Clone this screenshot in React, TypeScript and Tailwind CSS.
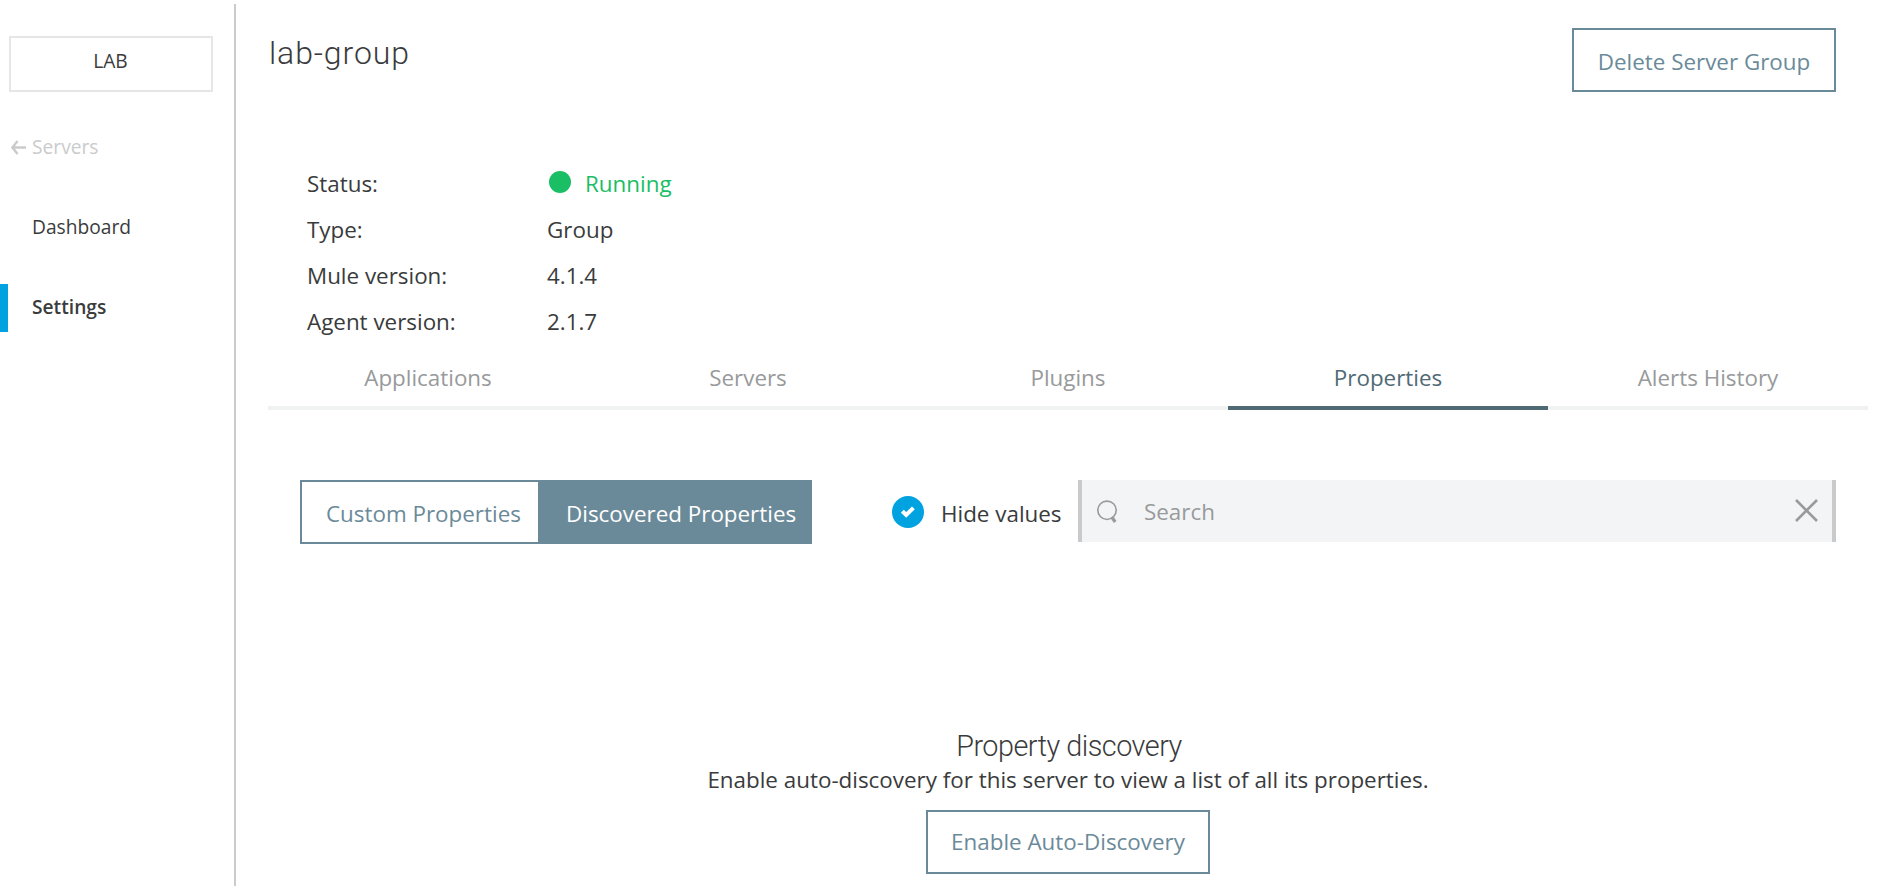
import React from "react";

const navItems = [
  { label: "Dashboard", active: false },
  { label: "Settings", active: true },
];

const details = [
  { label: "Type:", value: "Group" },
  { label: "Mule version:", value: "4.1.4" },
  { label: "Agent version:", value: "2.1.7" },
];

const tabs = ["Applications", "Servers", "Plugins", "Properties", "Alerts History"];
const activeTab = "Properties";

function Sidebar() {
  return (
    <aside className="flex w-[234px] shrink-0 flex-col pt-8 text-[19.2px] leading-6">
      <button className="ml-[9px] flex h-14 w-[204px] items-center justify-center border-2 border-[#e6e6e6] pb-[7px] pr-[1px]">
        LAB
      </button>
      <a className="mt-8 flex h-12 items-center gap-[6px] pb-[3px] pl-[11px] text-[#cacbcc]">
        <svg className="mt-[1px] h-[15px] w-[15px]" viewBox="0 0 15 15" fill="none" stroke="currentColor" strokeWidth="2.4">
          <path d="M15 7.5H2M6.6 0.9L1.4 7.5L6.6 14.1" />
        </svg>
        Servers
      </a>
      {navItems.map((item) => (
        <a
          key={item.label}
          className={
            item.active
              ? "mt-8 flex h-12 items-center border-l-8 border-[#00a2df] pb-[3px] pl-6 font-semibold"
              : "mt-8 flex h-12 items-center pb-[3px] pl-8"
          }
        >
          {item.label}
        </a>
      ))}
    </aside>
  );
}

function Details() {
  return (
    <dl className="mb-[3px] ml-[39px] mt-[69px] grid grid-cols-[240px_auto] justify-start">
      <dt className="flex h-[46px] items-center">Status:</dt>
      <dd className="flex h-[46px] items-center text-[#1abe65]">
        <span className="mb-[4px] ml-[2px] mr-[14px] h-[22px] w-[22px] rounded-full bg-[#1abe65]" />
        Running
      </dd>
      {details.map((row) => (
        <React.Fragment key={row.label}>
          <dt className="flex h-[46px] items-center">{row.label}</dt>
          <dd className="flex h-[46px] items-center">{row.value}</dd>
        </React.Fragment>
      ))}
    </dl>
  );
}

function Tabs() {
  return (
    <nav className="grid w-[1600px] grid-cols-5 text-center">
      {tabs.map((tab) => (
        <a
          key={tab}
          className={
            tab === activeTab
              ? "h-[62px] border-b-4 border-[#506a75] pt-[14px] text-[#506a75]"
              : "h-[62px] border-b-4 border-[#f0f1f1] pt-[14px] text-[#989a9b]"
          }
        >
          {tab}
        </a>
      ))}
    </nav>
  );
}

function Toolbar() {
  return (
    <div className="mt-[70px] flex pl-8">
      <div className="flex h-16 text-[#6b8a99]">
        <button className="w-[238px] border-2 border-r-0 border-[#6b8a99] pl-6 pt-[3px] text-left">
          Custom Properties
        </button>
        <button className="w-[274px] bg-[#6b8a99] pl-7 pt-[3px] text-left text-white">Discovered Properties</button>
      </div>
      <label className="ml-20 flex h-16 items-center">
        <span className="flex h-8 w-8 items-center justify-center rounded-full bg-[#00a2df]">
          <svg className="h-3 w-[14px]" viewBox="0 0 14 12" fill="none" stroke="#fff" strokeWidth="4">
            <path d="M1.4 5.2L5.2 9L12.4 1.8" />
          </svg>
        </span>
        <span className="ml-[17px] pt-[4px]">Hide values</span>
      </label>
      <div className="ml-auto mr-[50px] flex h-[62px] w-[758px] items-center border-x-4 border-[#c9cacb] bg-[#f3f4f6] text-[#989a9b]">
        <svg className="ml-[15px] mt-[2px] h-6 w-[21px]" viewBox="0 0 21 24" fill="none" stroke="currentColor">
          <circle cx="10" cy="10.3" r="9.2" strokeWidth="1.6" />
          <path d="M14.8 17L18.2 22" strokeWidth="3.2" />
        </svg>
        <span className="ml-[26px] flex-1 pt-[1px]">Search</span>
        <svg className="mb-[1px] mr-[14px] h-[23px] w-[23px]" viewBox="0 0 23 23" fill="none" stroke="currentColor" strokeWidth="2.6">
          <path d="M1 1L22 22M22 1L1 22" />
        </svg>
      </div>
    </div>
  );
}

function EmptyState() {
  return (
    <section className="flex w-[1600px] flex-col items-center pt-[184px]">
      <h2 className="pl-[2px] font-['Roboto'] text-[28.8px] font-light leading-9 tracking-[-0.5px]">Property discovery</h2>
      <p className="leading-8">Enable auto-discovery for this server to view a list of all its properties.</p>
      <button className="mt-[14px] h-16 w-[284px] border-2 border-[#6b8a99] text-[#6b8a99]">
        Enable Auto-Discovery
      </button>
    </section>
  );
}

export default function App() {
  return (
    <div className="flex h-[886px] w-[1886px] overflow-hidden bg-white pt-1 font-['Open_Sans',sans-serif] text-[#3a3b3c]">
      <Sidebar />
      <main className="flex-1 border-l-2 border-[#cacbcc] pl-8 text-[22.4px] leading-8">
        <header className="flex h-[88px] items-start justify-between pr-[50px] pt-6">
          <h1 className="ml-[1px] mt-[5px] font-['Roboto'] text-[32px] font-light leading-10 tracking-[0.9px]">lab-group</h1>
          <button className="h-16 w-[264px] border-2 border-[#6b8a99] pt-[3px] text-[#6b8a99]">Delete Server Group</button>
        </header>
        <Details />
        <Tabs />
        <Toolbar />
        <EmptyState />
      </main>
    </div>
  );
}
